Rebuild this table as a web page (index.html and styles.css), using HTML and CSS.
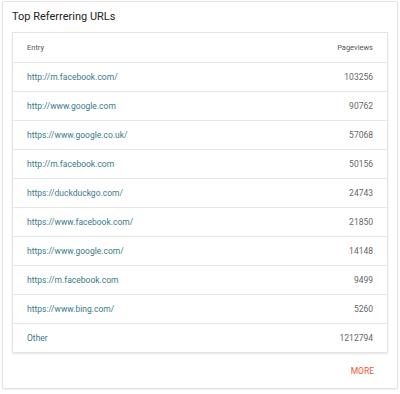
FILE: index.html
```html
<!DOCTYPE html>
<html lang="en">
<head>
  <meta charset="UTF-8">
  <meta name="viewport" content="width=device-width, initial-scale=1.0">
  <title>Top Referrering URLs</title>
  <link rel="stylesheet" href="styles.css">
</head>
<body>
  <section class="widget">
    <h2 class="widget-title">Top Referrering URLs</h2>

    <table class="ref-table">
      <thead>
        <tr>
          <th class="col-entry">Entry</th>
          <th class="col-views">Pageviews</th>
        </tr>
      </thead>
      <tbody>
        <tr><td><a href="#">http://m.facebook.com/</a></td><td class="num">103256</td></tr>
        <tr><td><a href="#">http://www.google.com</a></td><td class="num">90762</td></tr>
        <tr><td><a href="#">https://www.google.co.uk/</a></td><td class="num">57068</td></tr>
        <tr><td><a href="#">http://m.facebook.com</a></td><td class="num">50156</td></tr>
        <tr><td><a href="#">https://duckduckgo.com/</a></td><td class="num">24743</td></tr>
        <tr><td><a href="#">https://www.facebook.com/</a></td><td class="num">21850</td></tr>
        <tr><td><a href="#">https://www.google.com/</a></td><td class="num">14148</td></tr>
        <tr><td><a href="#">https://m.facebook.com</a></td><td class="num">9499</td></tr>
        <tr><td><a href="#">https://www.bing.com/</a></td><td class="num">5260</td></tr>
        <tr><td><a href="#">Other</a></td><td class="num">1212794</td></tr>
      </tbody>
    </table>

    <div class="widget-footer">
      <a href="#" class="more">MORE</a>
    </div>
  </section>
</body>
</html>
```

FILE: styles.css
```css
body {
  margin: 0;
  padding: 1px 2px;
  font-family: Roboto, "Liberation Sans", sans-serif;
  background: #fff;
  color: #333;
}

.widget {
  border: 1px solid #e3e3e3;
  border-radius: 2px;
  box-shadow: 0 1px 2px rgba(0,0,0,0.08);
  padding: 0 9px;
  height: 388px;
  box-sizing: border-box;
}

.widget-title {
  margin: 0;
  height: 30px;
  line-height: 30px;
  font-size: 11px;
  font-weight: 400;
  color: #222;
}

.ref-table {
  width: 100%;
  border-collapse: collapse;
  border: 1px solid #e4e4e4;
  box-shadow: 0 1px 2px rgba(0,0,0,0.1);
  font-size: 8.5px;
}

.ref-table th {
  height: 29px;
  font-size: 7.5px;
  font-weight: 400;
  color: #555;
  text-align: left;
  padding: 0 14px;
  border-bottom: 1px solid #e6e6e6;
}

.ref-table th.col-views {
  text-align: right;
}

.ref-table td {
  height: 28px;
  padding: 0 14px;
  border-bottom: 1px solid #e6e6e6;
}

.ref-table tr:last-child td {
  border-bottom: none;
}

.ref-table a {
  color: #3b7a88;
  text-decoration: none;
}

.ref-table .num {
  text-align: right;
  color: #666;
  font-size: 8.5px;
}

.widget-footer {
  display: flex;
  justify-content: flex-end;
  padding: 13px 14px 0;
}

.more {
  color: #f0562e;
  font-size: 8.5px;
  text-decoration: none;
}
```
